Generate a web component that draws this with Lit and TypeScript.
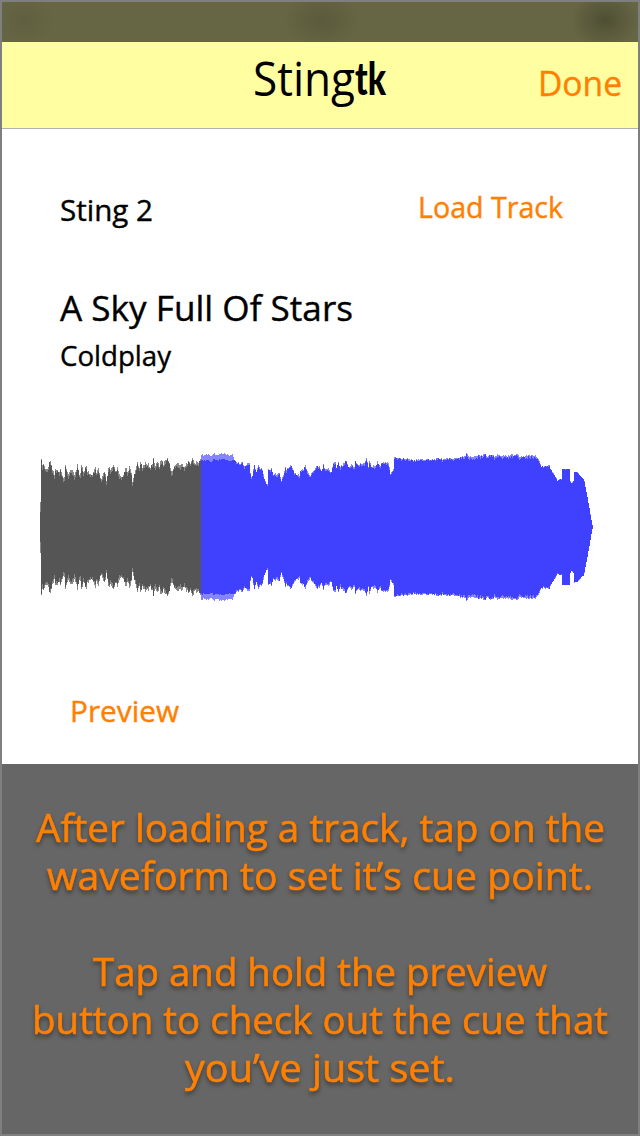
import { LitElement, html, css, svg } from "lit";
import { customElement, property } from "lit/decorators.js";

/** One line of text, stretched to an exact advance width. */
@customElement("fit-text")
class FitText extends LitElement {
  @property() text = "";
  @property({ type: Number }) width = 100;
  @property({ type: Number }) size = 30;
  @property({ type: Number }) line = 48;

  static styles = css`
    :host { display: block; }
    svg { display: block; overflow: visible; }
    text {
      fill: currentColor;
      stroke: currentColor;
      stroke-width: var(--heft, 0.4px);
      font-variant-ligatures: none;
    }
  `;

  render() {
    const base = Math.round(this.line / 2 + this.size * 0.357);
    return html`<svg width=${this.width} height=${this.line}>
      <text x="0" y=${base} font-size=${this.size} textLength=${this.width}
        lengthAdjust="spacingAndGlyphs">${this.text}</text>
    </svg>`;
  }
}

// Envelope points: x, top edge; both in thirds of a pixel.
const PLAYED = [33,46,36,75,42,67,45,85,52,92,58,67,62,68,66,85,72,105,78,85,84,95,90,90,96,105,102,118,106,80,110,95,116,105,122,92,126,88,132,110,138,100,142,77,146,90,150,108,154,72,158,88,162,105,167,75,172,92,178,100,184,110,190,98,196,85,200,100,206,90,212,122,218,108,224,95,229,124,234,90,238,78,242,95,246,88,250,73,254,85,258,98,262,82,266,95,272,110,280,105,286,80,290,88,294,105,298,82,304,100,307,125,312,100,318,90,322,68,326,85,332,68,338,82,344,70,350,78,354,66,360,85,364,78,370,62,376,80,382,70,388,75,394,60,400,72,406,65,412,58,418,75,424,100,430,85,436,80,442,65,448,78,454,70,460,85,464,78,470,72,476,65,480,75,484,65,488,55,494,75,500,60,506,70,513,60];

const shift = (points: number[], dx: number) => points.map((v, i) => (i % 2 ? v : v + dx));

const REST = [
  ...[514,42,522,46,532,42,544,48,552,40,560,46,570,42],
  ...shift([10,39,20,45,32,44,38,44,41,58,50,68,60,70,66,66,72,78,82,72,88,68,91,98,95,118,99,92,104,74,110,100,114,74,120,82,126,84,130,105,135,122,142,134,145,84,150,98,154,84,160,102,168,104,175,98,180,106,184,122,190,100,196,84,200,90,208,80,214,76,220,92,228,104,238,108,242,88,250,90,256,80,262,92,270,106,276,98,284,92,290,76,296,78,304,92,310,72,316,90,324,84,334,96,340,72,344,62,349,82,354,66,362,80,370,70,380,62,386,84,394,72,402,82,406,64,414,76,424,68,432,72,439,58,445,80,448,64,456,84,464,76,472,68,480,78,488,64,498,68,506,72,510,98,518,92,522,84,523,50,534,54], 570),
  ...shift([2,56,16,56,32,58,44,62,60,56,80,58,100,59,114,55,130,58,146,54,160,58,172,53,180,52,190,50,196,50,199,38,204,46,214,52,226,48,238,46,246,46,255,38,260,50,270,44,284,50,294,42,304,50,314,46,326,48,336,40,342,48,350,40,358,50,368,48,374,50,384,45,394,46,400,50,406,44,412,52,418,62,424,78,434,80,440,74,448,78,456,95,464,105,472,122,480,116,485,119,486,87,509,88,510,122,515,130,521,122,522,94,532,96,542,108,552,118,556,140,562,170,568,205,573,235,578,257], 1110),
];

const MID = 87;

function topAt(points: number[], t: number): number {
  for (let i = 2; i < points.length; i += 2) {
    if (t <= points[i]) {
      const f = (t - points[i - 2]) / (points[i] - points[i - 2]);
      return points[i - 1] + Math.max(0, f) * (points[i + 1] - points[i - 1]);
    }
  }
  return points[points.length - 1];
}

function noise(i: number): number {
  const v = Math.sin(i * 127.1 + 11.7) * 43758.5453;
  return v - Math.floor(v);
}

function shape(points: number[], from: number, to: number, inset: (px: number) => number) {
  let up = "";
  let down = "";
  for (let px = from; px < to; px++) {
    const y = Math.min(MID - 0.5, topAt(points, px * 3 + 1) / 3 + inset(px));
    up += `L${px - 10} ${y.toFixed(1)}H${px - 9}`;
    down = `L${px - 9} ${(MID * 2 - y).toFixed(1)}H${px - 10}` + down;
  }
  return "M" + up.slice(1) + down + "Z";
}

@customElement("wave-form")
class WaveForm extends LitElement {
  static styles = css`
    :host { display: block; }
    svg { display: block; }
    .played-soft { fill: #898989; }
    .played { fill: #555; }
    .rest-soft { fill: #8585ff; }
    .rest { fill: #4040ff; }
  `;

  render() {
    const jag = (px: number) => (noise(px) - 0.6) * 4;
    const darkInset = (px: number) => jag(px) + noise(px + 900) * 5;
    const fine = (px: number) => (noise(px) - 0.5) * (px > 220 && px < 362 ? 2.6 : px > 520 ? 0.4 : 1.6);
    const blueInset = (px: number) => {
      if (px < 203) return 5 + noise(px);
      const depth = px < 364 ? 2.8 : px > 430 && px < 510 ? 3.4 : px > 520 ? 0.5 : 1.8;
      return fine(px) + noise(px + 500) * depth;
    };
    return html`<svg width="553" height="174" shape-rendering="crispEdges">
      ${svg`
        <rect class="played-soft" x="0" y="62" width="1" height="51"></rect>
        <rect class="played" x="0" y="72" width="1" height="30"></rect>
        <path class="played-soft" d=${shape(PLAYED, 11, 171, jag)}></path>
        <path class="played" d=${shape(PLAYED, 11, 171, darkInset)}></path>
        <path class="rest-soft" d=${shape(REST, 171, 562, fine)}></path>
        <path class="rest" d=${shape(REST, 171, 562, blueInset)}></path>
        <rect class="rest" x="552" y="85" width="1" height="4"></rect>`}
    </svg>`;
  }
}

@customElement("app-root")
class AppRoot extends LitElement {
  static styles = css`
    :host {
      display: flex;
      flex-direction: column;
      box-sizing: border-box;
      width: 640px;
      height: 1136px;
      border: 2px solid #7f7f7f;
      background: #fff;
      color: #000;
      font-family: "Open Sans", "Noto Sans", sans-serif;
    }
    .status {
      height: 40px;
      background:
        radial-gradient(ellipse 34px 28px at 603px 18px, #4e4e34, transparent),
        radial-gradient(ellipse 38px 28px at 320px 18px, #5a5a3d, transparent),
        radial-gradient(ellipse 30px 26px at 22px 18px, #606041, transparent),
        #666644;
    }
    .bar {
      display: grid;
      grid-template-columns: 1fr auto 1fr;
      height: 86px;
      background: #ffffa2;
      border-bottom: 1px solid #b0b0b0;
    }
    .logo {
      grid-column: 2;
      display: flex;
      padding: 9px 2px 0 0;
      --heft: 0px;
    }
    .logo .bold { font-family: Lato, sans-serif; font-weight: 900; }
    .done { justify-self: end; padding: 18px 16px 0 0; }
    .accent { color: #ff8000; }
    .main {
      display: flex;
      flex-direction: column;
      height: 635px;
      box-sizing: border-box;
      padding: 55px 0 0 58px;
    }
    .row { display: flex; justify-content: space-between; padding-right: 75px; }
    .sting { padding-top: 3px; }
    .title { padding-top: 50px; }
    .wave { padding: 61px 0 0; margin-left: -20px; }
    .preview { padding: 74px 0 0 10px; }
    .help {
      flex: 1;
      display: flex;
      flex-direction: column;
      align-items: center;
      padding-top: 40px;
      background: #666;
      color: #ff8000;
      --heft: 0.6px;
    }
    .help fit-text { filter: drop-shadow(0 3px 2px rgba(0, 0, 0, 0.4)); }
    .gap { height: 48px; }
  `;

  render() {
    return html`
      <div class="status"></div>
      <div class="bar">
        <div class="logo">
          <fit-text text="Sting" width="102" size="47" line="56"></fit-text>
          <fit-text class="bold" text="tk" width="31" size="46" line="56"></fit-text>
        </div>
        <fit-text class="done accent" text="Done" width="84" size="35" line="48"></fit-text>
      </div>
      <div class="main">
        <div class="row">
          <fit-text class="sting" text="Sting 2" width="93" size="29.5" line="46"></fit-text>
          <fit-text class="accent" text="Load Track" width="145" size="29" line="48"></fit-text>
        </div>
        <fit-text class="title" text="A Sky Full Of Stars" width="293" size="35.5" line="50"></fit-text>
        <fit-text text="Coldplay" width="111" size="28" line="46"></fit-text>
        <wave-form class="wave"></wave-form>
        <fit-text class="preview accent" text="Preview" width="109" size="29" line="48"></fit-text>
      </div>
      <div class="help">
        <fit-text text="After loading a track, tap on the" width="569" size="39" line="48"></fit-text>
        <fit-text text="waveform to set it’s cue point." width="546" size="39" line="48"></fit-text>
        <div class="gap"></div>
        <fit-text text="Tap and hold the preview" width="454" size="39" line="48"></fit-text>
        <fit-text text="button to check out the cue that" width="576" size="39" line="48"></fit-text>
        <fit-text text="you’ve just set." width="270" size="39" line="48"></fit-text>
      </div>
    `;
  }
}
